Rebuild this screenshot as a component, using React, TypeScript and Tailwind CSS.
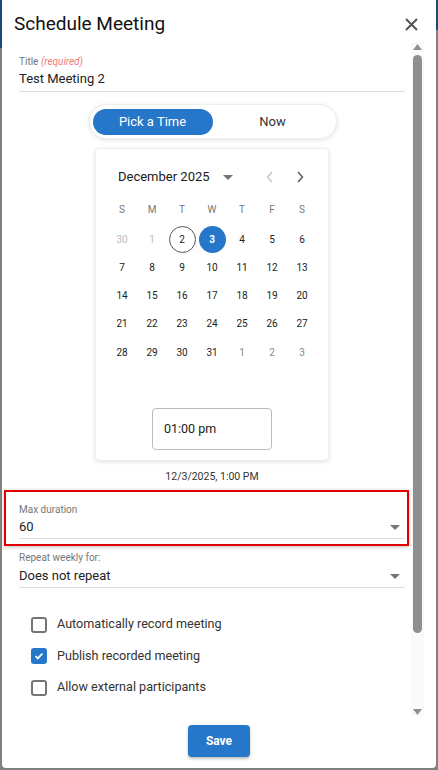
import React, { useState } from 'react';

const weeks: { d: number; muted?: 'light' | 'mid' }[][] = [
  [{ d: 30, muted: 'light' }, { d: 1, muted: 'light' }, { d: 2 }, { d: 3 }, { d: 4 }, { d: 5 }, { d: 6 }],
  [{ d: 7 }, { d: 8 }, { d: 9 }, { d: 10 }, { d: 11 }, { d: 12 }, { d: 13 }],
  [{ d: 14 }, { d: 15 }, { d: 16 }, { d: 17 }, { d: 18 }, { d: 19 }, { d: 20 }],
  [{ d: 21 }, { d: 22 }, { d: 23 }, { d: 24 }, { d: 25 }, { d: 26 }, { d: 27 }],
  [{ d: 28 }, { d: 29 }, { d: 30 }, { d: 31 }, { d: 1, muted: 'mid' }, { d: 2, muted: 'mid' }, { d: 3, muted: 'mid' }],
];

const Caret = () => (
  <svg width="10" height="5" viewBox="0 0 10 5" className="fill-[#757575]">
    <path d="M0 0h10L5 5z" />
  </svg>
);

const Checkbox = ({ checked, label }: { checked: boolean; label: string }) => (
  <label className="flex items-center gap-[10px] h-[31.5px]">
    {checked ? (
      <span className="w-4 h-4 rounded-[3px] bg-[#2677c9] flex items-center justify-center">
        <svg width="10" height="8" viewBox="0 0 10 8" fill="none" stroke="white" strokeWidth="1.8">
          <path d="M1.5 4.2l2.3 2.2L8.5 1.5" />
        </svg>
      </span>
    ) : (
      <span className="w-4 h-4 rounded-[3px] border-2 border-[#757575] bg-white" />
    )}
    <span className="text-[12.6px] text-[#333]">{label}</span>
  </label>
);

export default function App() {
  const [mode, setMode] = useState<'pick' | 'now'>('pick');

  return (
    <div className="w-[438px] h-[770px] bg-[#808080] flex" style={{ fontFamily: 'Roboto, "Noto Sans", sans-serif' }}>
      <div className="w-[2px] h-[48px] bg-[#1c4a78]" />
      <div className="flex-1 h-[768px] bg-white rounded-b-[4px] flex flex-col">
        {/* header */}
        <div className="h-[42px] flex items-center justify-between pl-[12px] pr-[18px] shrink-0">
          <h1 className="text-[19px] text-[#111] mt-[7px]">Schedule Meeting</h1>
          <svg width="13" height="13" viewBox="0 0 13 13" stroke="#555" strokeWidth="2" className="mt-[6px]">
            <path d="M1 1l11 11M12 1L1 12" />
          </svg>
        </div>

        {/* body with scrollbar */}
        <div className="flex-1 flex min-h-0">
          <div className="flex-1 pl-[17px] pr-[6px] pt-[14px] flex flex-col">
            <div className="border-b border-[#ddd] pb-[3px]">
              <div className="text-[10px] text-[#777] leading-[12px]">
                Title <span className="italic text-[#f07a7a]">(required)</span>
              </div>
              <div className="text-[13px] text-[#222] leading-[18px] mt-[2px]">Test Meeting 2</div>
            </div>

            <div className="flex justify-center mt-[12px] ml-[1px]">
              <div className="w-[248px] h-[35px] rounded-full bg-white border border-[#eee] shadow-[0_1px_4px_rgba(0,0,0,0.12)] flex items-center p-[3px]">
                <button
                  onClick={() => setMode('pick')}
                  className={`w-[120px] h-[26px] rounded-full text-[13px] ${mode === 'pick' ? 'bg-[#2677c9] text-white' : 'text-[#333]'}`}
                >
                  Pick a Time
                </button>
                <button
                  onClick={() => setMode('now')}
                  className={`flex-1 h-[26px] rounded-full text-[13px] ${mode === 'now' ? 'bg-[#2677c9] text-white' : 'text-[#333]'}`}
                >
                  Now
                </button>
              </div>
            </div>

            <div className="flex justify-center mt-[9px]">
              <div className="w-[234px] h-[313px] bg-white rounded-[4px] border border-[#eee] shadow-[0_1px_4px_rgba(0,0,0,0.12)] flex flex-col items-center">
                <div className="w-[210px] flex items-center mt-[18px] h-[20px]">
                  <span className="text-[13px] text-[#1a1a1a] ml-[11px]">December 2025</span>
                  <span className="ml-[13px] mt-[1px]"><Caret /></span>
                  <svg width="8" height="12" viewBox="0 0 8 12" fill="none" stroke="#c4c4c4" strokeWidth="1.4" className="ml-[33px]">
                    <path d="M6 1L1.5 6 6 11" />
                  </svg>
                  <svg width="8" height="12" viewBox="0 0 8 12" fill="none" stroke="#555" strokeWidth="1.4" className="ml-[22px]">
                    <path d="M2 1l4.5 5L2 11" />
                  </svg>
                </div>

                <div className="grid grid-cols-7 w-[210px] mt-[15px]">
                  {['S', 'M', 'T', 'W', 'T', 'F', 'S'].map((w, i) => (
                    <div key={i} className="h-[14px] flex items-center justify-center text-[10px] text-[#777]">{w}</div>
                  ))}
                </div>

                <div className="w-[210px] mt-[9px]">
                  {weeks.map((row, ri) => (
                    <div key={ri} className="grid grid-cols-7 h-[28.25px]">
                      {row.map((c, ci) => {
                        const isToday = ri === 0 && c.d === 2;
                        const isSel = ri === 0 && c.d === 3;
                        return (
                          <div key={ci} className="flex items-center justify-center">
                            <span
                              className={`w-[27px] h-[27px] rounded-full flex items-center justify-center text-[10px] ${
                                isSel
                                  ? 'bg-[#2677c9] text-white font-bold'
                                  : isToday
                                  ? 'border border-[#555] text-[#222]'
                                  : c.muted === 'light'
                                  ? 'text-[#bbb]'
                                  : c.muted === 'mid'
                                  ? 'text-[#888]'
                                  : 'text-[#222]'
                              }`}
                            >
                              {c.d}
                            </span>
                          </div>
                        );
                      })}
                    </div>
                  ))}
                </div>

                <div className="mt-[42px] w-[120px] h-[42px] border border-[#bbb] rounded-[4px] flex items-center pl-[11px] text-[12.5px] text-[#222]">
                  01:00 pm
                </div>
              </div>
            </div>

            <div className="text-center text-[10.5px] leading-[14px] text-[#333] mt-[9px]">12/3/2025, 1:00 PM</div>

            <div className="-ml-[15px] -mr-[4px] mt-[6px] border-2 border-[#e00000] pl-[13px] pt-[12px] pb-[5px] pr-[2px] shadow-[0_1px_4px_rgba(0,0,0,0.25)]">
              <div className="border-b border-[#ddd] pb-[2px]">
                <div className="text-[10px] text-[#777] leading-[12px]">Max duration</div>
                <div className="flex items-center justify-between pr-[5px] mt-[2px]">
                  <span className="text-[13px] text-[#222] leading-[18px]">60</span>
                  <Caret />
                </div>
              </div>
            </div>

            <div className="border-b border-[#ddd] pb-[2px] mt-[6px]">
              <div className="text-[10px] text-[#777] leading-[12px]">Repeat weekly for:</div>
              <div className="flex items-center justify-between pr-[5px] mt-[3px]">
                <span className="text-[13px] text-[#222] leading-[18px]">Does not repeat</span>
                <Caret />
              </div>
            </div>

            <div className="mt-[21px] pl-[12px] flex flex-col">
              <Checkbox checked={false} label="Automatically record meeting" />
              <Checkbox checked={true} label="Publish recorded meeting" />
              <Checkbox checked={false} label="Allow external participants" />
            </div>
          </div>

          {/* scrollbar */}
          <div className="w-[13px] mr-[12px] bg-[#fafafa] flex flex-col items-center">
            <svg width="9" height="6" viewBox="0 0 9 6" className="fill-[#8f8f8f] mt-[2px]">
              <path d="M4.5 0L9 6H0z" />
            </svg>
            <div className="w-[9px] h-[578px] rounded-full bg-[#8f8f8f] mt-[5px]" />
            <div className="flex-1" />
            <svg width="9" height="6" viewBox="0 0 9 6" className="fill-[#8f8f8f] mb-[1px]">
              <path d="M0 0h9L4.5 6z" />
            </svg>
          </div>
        </div>

        {/* footer */}
        <div className="h-[52px] shrink-0 flex justify-center items-start pt-[9px]">
          <button className="w-[62px] h-[32px] rounded-[4px] bg-[#2677c9] text-white text-[12px] font-bold shadow-[0_2px_3px_rgba(0,0,0,0.25)]">
            Save
          </button>
        </div>
      </div>
      <div className="w-[2px] h-[30px] bg-[#1c4a78]" />
    </div>
  );
}
